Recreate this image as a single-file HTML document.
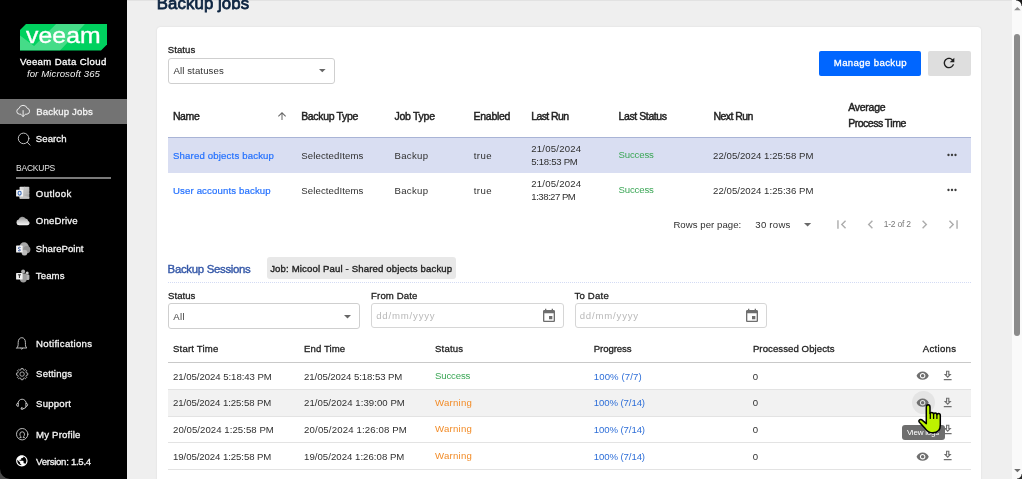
<!DOCTYPE html>
<html>
<head>
<meta charset="utf-8">
<title>Backup jobs</title>
<style>
*{box-sizing:border-box;margin:0;padding:0}
html,body{width:1022px;height:479px;overflow:hidden;background:#efefef;font-family:"Liberation Sans",sans-serif;font-size:10.5px;color:#2a2a2a}
.a{position:absolute}
.t{position:absolute;white-space:nowrap;font-family:"Liberation Sans",sans-serif}
svg{position:absolute;display:block;overflow:visible}
</style>
</head>
<body>
<div id="root" style="position:absolute;left:0;top:0;width:1022px;height:479px;overflow:hidden;will-change:transform">
<!-- page bg + card -->
<div class="a" style="left:127px;top:0;width:895px;height:479px;background:#efefef"></div>
<div class="a" style="left:127px;top:0;width:895px;height:1px;background:#e2e2e2"></div>
<div class="a" style="left:157px;top:27px;width:824px;height:470px;background:#fff;border-radius:3.5px;box-shadow:0 0 2px rgba(0,0,0,0.10)"></div>

<!-- scrollbar -->
<div class="a" style="left:1012px;top:0;width:10px;height:479px;background:#fafafa"></div>
<div class="a" style="left:1014px;top:34px;width:6px;height:302px;background:#8b8b8b;border-radius:3px"></div>
<svg style="left:1013.6px;top:6.8px" width="6.8" height="3.3" viewBox="0 0 8 4"><path d="M0 4L4 0L8 4z" fill="#8c8c8c"/></svg>
<svg style="left:1013.6px;top:468.9px" width="6.8" height="3.3" viewBox="0 0 8 4"><path d="M0 0L4 4L8 0z" fill="#6e6e6e"/></svg>
<div class="a" style="left:1016px;top:0;width:6px;height:6px;background:radial-gradient(circle at 0 100%,#fafafa 5px,#1a1a1a 6px)"></div>
<div class="a" style="left:1017px;top:474px;width:5px;height:5px;background:radial-gradient(circle at 0 0,#fafafa 4px,#2a2a2a 5px)"></div>

<!-- SIDEBAR -->
<div class="a" style="left:0;top:0;width:127px;height:479px;background:#000"></div>
<div class="a" style="left:0;top:99px;width:127px;height:24.5px;background:#737373"></div>
<div class="a" style="left:16px;top:177.4px;width:95px;height:1.2px;background:#7a7a7a"></div>

<!-- logo -->
<svg style="left:20px;top:24px" width="87" height="26.5" viewBox="0 0 87 26.5">
  <defs><clipPath id="lg"><path d="M6 0H87V20.5L81 26.5H0V6z"/></clipPath></defs>
  <path d="M6 0H87V20.5L81 26.5H0V6z" fill="#00d15f"/>
  <g clip-path="url(#lg)"><path d="M0 11.6L14.1 21.9L36.1 0H64.9L40 26.5H0z" fill="#45dc88"/></g>
</svg>
<div class="a" style="white-space:nowrap;left:26.3px;top:21.1px;font-size:22px;line-height:30px;height:30px;color:#fff;letter-spacing:0.1px;-webkit-text-stroke:0.35px #fff;transform:scaleX(1.125);transform-origin:0 0">veeam</div>

<!-- top filter select -->
<div class="a" style="left:168px;top:58px;width:167px;height:25.5px;border:1px solid #cfcfcf;border-radius:3px;background:#fff"></div>
<svg style="left:318.6px;top:69px" width="6.6" height="3.4" viewBox="0 0 10 5"><path d="M0 0h10L5 5z" fill="#666"/></svg>

<!-- buttons -->
<div class="a" style="left:819px;top:51px;width:102px;height:24.5px;background:#0066ff;border-radius:2px"></div>
<div class="a" style="left:928px;top:51px;width:42.7px;height:24.5px;background:#dedede;border-radius:2px"></div>
<svg style="left:941px;top:55px" width="16" height="16" viewBox="0 0 24 24"><path fill="#1f1f1f" d="M17.65 6.35C16.2 4.9 14.21 4 12 4c-4.42 0-7.99 3.58-7.99 8s3.57 8 7.99 8c3.73 0 6.84-2.55 7.730-6h-2.080c-.82 2.330-3.040 4-5.650 4-3.310 0-6-2.690-6-6s2.690-6 6-6c1.660 0 3.140.69 4.220 1.780L13 11h7V4l-2.350 2.350z"/></svg>

<!-- table 1 -->
<div class="a" style="left:168px;top:137.4px;width:802.7px;height:35.2px;background:#d9def2;border-top:1px solid #a9b4d6"></div>
<svg style="left:276px;top:110px" width="12" height="12" viewBox="0 0 24 24"><path fill="#666" d="M4 12l1.410 1.410L11 7.830V20h2V7.830l5.580 5.590L20 12l-8-8-8 8z"/></svg>
<svg style="left:944.8px;top:147.5px" width="14" height="14" viewBox="0 0 24 24"><path fill="#3a3a3a" d="M6 10c-1.100 0-2 .9-2 2s.9 2 2 2 2-.9 2-2-.9-2-2-2zm12 0c-1.100 0-2 .9-2 2s.9 2 2 2 2-.9 2-2-.9-2-2-2zm-6 0c-1.100 0-2 .9-2 2s.9 2 2 2 2-.9 2-2-.9-2-2-2z"/></svg>
<svg style="left:944.8px;top:182.8px" width="14" height="14" viewBox="0 0 24 24"><path fill="#3a3a3a" d="M6 10c-1.100 0-2 .9-2 2s.9 2 2 2 2-.9 2-2-.9-2-2-2zm12 0c-1.100 0-2 .9-2 2s.9 2 2 2 2-.9 2-2-.9-2-2-2zm-6 0c-1.100 0-2 .9-2 2s.9 2 2 2 2-.9 2-2-.9-2-2-2z"/></svg>

<!-- pagination icons -->
<svg style="left:803.6px;top:223.4px" width="7.2" height="3.6" viewBox="0 0 10 5"><path d="M0 0h10L5 5z" fill="#6a6a6a"/></svg>
<svg style="left:832.5px;top:216.3px" width="17" height="17" viewBox="0 0 24 24"><path fill="#adadad" d="M18.410 16.590L13.820 12l4.590-4.590L17 6l-6 6 6 6zM6 6h2v12H6z"/></svg>
<svg style="left:861.5px;top:216.3px" width="17" height="17" viewBox="0 0 24 24"><path fill="#adadad" d="M15.410 7.410L14 6l-6 6 6 6 1.410-1.410L10.830 12z"/></svg>
<svg style="left:915.6px;top:216.3px" width="17" height="17" viewBox="0 0 24 24"><path fill="#adadad" d="M10 6L8.590 7.410 13.170 12l-4.580 4.590L10 18l6-6z"/></svg>
<svg style="left:945px;top:216.3px" width="17" height="17" viewBox="0 0 24 24"><path fill="#adadad" d="M5.590 7.410L10.180 12l-4.590 4.590L7 18l6-6-6-6zM16 6h2v12h-2z"/></svg>

<!-- sessions -->
<div class="a" style="left:266.5px;top:257.3px;width:189.4px;height:22.1px;background:#e8e8e8;border-radius:3px"></div>
<div class="a" style="left:168px;top:282px;width:803px;height:0;border-top:1px dotted #d3dbf4"></div>
<div class="a" style="left:168.3px;top:303.3px;width:192.2px;height:25.5px;border:1px solid #cfcfcf;border-radius:3px;background:#fff"></div>
<svg style="left:344px;top:315px" width="7" height="3.5" viewBox="0 0 10 5"><path d="M0 0h10L5 5z" fill="#666"/></svg>
<div class="a" style="left:371.4px;top:303.1px;width:192.4px;height:24.6px;border:1px solid #d6d6d6;border-radius:3px;background:#fff"></div>
<div class="a" style="left:574.5px;top:303.1px;width:192.7px;height:24.6px;border:1px solid #d6d6d6;border-radius:3px;background:#fff"></div>
<svg style="left:541px;top:308.2px" width="16" height="16" viewBox="0 0 24 24"><path fill="#6e6e6e" d="M17 12h-5v5h5v-5zM16 1v2H8V1H6v2H5c-1.110 0-1.990.9-1.990 2L3 19c0 1.100.89 2 2 2h14c1.100 0 2-.9 2-2V5c0-1.100-.9-2-2-2h-1V1h-2zm3 18H5V8h14v11z"/></svg>
<svg style="left:744.2px;top:308.2px" width="16" height="16" viewBox="0 0 24 24"><path fill="#6e6e6e" d="M17 12h-5v5h5v-5zM16 1v2H8V1H6v2H5c-1.110 0-1.990.9-1.990 2L3 19c0 1.100.89 2 2 2h14c1.100 0 2-.9 2-2V5c0-1.100-.9-2-2-2h-1V1h-2zm3 18H5V8h14v11z"/></svg>

<!-- sessions table lines -->
<div class="a" style="left:168px;top:389.6px;width:802.7px;height:26.6px;background:#f2f2f2"></div>
<div class="a" style="left:168px;top:361.8px;width:802.7px;height:1px;background:#c9c9c9"></div>
<div class="a" style="left:168px;top:388.8px;width:802.7px;height:1px;background:#e3e3e3"></div>
<div class="a" style="left:168px;top:415.8px;width:802.7px;height:1px;background:#e3e3e3"></div>
<div class="a" style="left:168px;top:442px;width:802.7px;height:1px;background:#e3e3e3"></div>
<div class="a" style="left:168px;top:468.9px;width:802.7px;height:1px;background:#e3e3e3"></div>

<!-- action icons -->
<div class="a" style="left:911.6px;top:391.3px;width:23.2px;height:23.2px;border-radius:50%;background:#e4e4e4"></div>
<svg style="left:916.0px;top:369.2px" width="13.3" height="13.3" viewBox="0 0 24 24"><path fill="#6f6f6f" d="M12 4.5C7 4.5 2.730 7.610 1 12c1.730 4.390 6 7.500 11 7.500s9.270-3.110 11-7.500c-1.730-4.390-6-7.500-11-7.500zM12 17c-2.760 0-5-2.240-5-5s2.240-5 5-5 5 2.240 5 5-2.240 5-5 5zm0-8c-1.660 0-3 1.340-3 3s1.340 3 3 3 3-1.340 3-3-1.340-3-3-3z"/></svg>
<svg style="left:940.7px;top:369.0px" width="13.4" height="13.4" viewBox="0 0 24 24"><path fill="#6f6f6f" d="M13 5v6h1.170L12 13.170 9.830 11H11V5h2m2-2H9v6H5l7 7 7-7h-4V3zm4 15H5v2h14v-2z"/></svg>
<svg style="left:916.0px;top:396.2px" width="13.3" height="13.3" viewBox="0 0 24 24"><path fill="#6f6f6f" d="M12 4.5C7 4.5 2.730 7.610 1 12c1.730 4.390 6 7.500 11 7.500s9.270-3.110 11-7.500c-1.730-4.390-6-7.500-11-7.500zM12 17c-2.760 0-5-2.240-5-5s2.240-5 5-5 5 2.240 5 5-2.240 5-5 5zm0-8c-1.660 0-3 1.340-3 3s1.340 3 3 3 3-1.340 3-3-1.340-3-3-3z"/></svg>
<svg style="left:940.7px;top:395.9px" width="13.4" height="13.4" viewBox="0 0 24 24"><path fill="#6f6f6f" d="M13 5v6h1.170L12 13.170 9.830 11H11V5h2m2-2H9v6H5l7 7 7-7h-4V3zm4 15H5v2h14v-2z"/></svg>
<svg style="left:916.0px;top:422.8px" width="13.3" height="13.3" viewBox="0 0 24 24"><path fill="#6f6f6f" d="M12 4.5C7 4.5 2.730 7.610 1 12c1.730 4.390 6 7.500 11 7.500s9.270-3.110 11-7.500c-1.730-4.390-6-7.500-11-7.500zM12 17c-2.760 0-5-2.240-5-5s2.240-5 5-5 5 2.240 5 5-2.240 5-5 5zm0-8c-1.660 0-3 1.340-3 3s1.340 3 3 3 3-1.340 3-3-1.340-3-3-3z"/></svg>
<svg style="left:940.7px;top:422.5px" width="13.4" height="13.4" viewBox="0 0 24 24"><path fill="#6f6f6f" d="M13 5v6h1.170L12 13.170 9.830 11H11V5h2m2-2H9v6H5l7 7 7-7h-4V3zm4 15H5v2h14v-2z"/></svg>
<svg style="left:916.0px;top:449.5px" width="13.3" height="13.3" viewBox="0 0 24 24"><path fill="#6f6f6f" d="M12 4.5C7 4.5 2.730 7.610 1 12c1.730 4.390 6 7.500 11 7.500s9.270-3.110 11-7.500c-1.730-4.390-6-7.500-11-7.500zM12 17c-2.760 0-5-2.240-5-5s2.240-5 5-5 5 2.240 5 5-2.240 5-5 5zm0-8c-1.660 0-3 1.340-3 3s1.340 3 3 3 3-1.340 3-3-1.340-3-3-3z"/></svg>
<svg style="left:940.7px;top:449.2px" width="13.4" height="13.4" viewBox="0 0 24 24"><path fill="#6f6f6f" d="M13 5v6h1.170L12 13.170 9.830 11H11V5h2m2-2H9v6H5l7 7 7-7h-4V3zm4 15H5v2h14v-2z"/></svg>
<!-- sidebar icons -->
<svg style="left:16px;top:105px" width="14.4" height="12.2" viewBox="0 0 14.4 12.2" fill="none" stroke="#ececec" stroke-width="1" stroke-linecap="round" stroke-linejoin="round">
<path d="M4.6 9.2H3.4A2.9 2.9 0 0 1 3.0 3.5A4.3 4.3 0 0 1 11.2 3.2A3.05 3.05 0 0 1 10.9 9.2H9.6"/>
<path d="M7.1 5.6V11.4M5.2 9.6L7.1 11.6L9 9.6"/></svg>
<svg style="left:17px;top:131.5px" width="14" height="14" viewBox="0 0 14 14" fill="none" stroke="#c9c9c9" stroke-width="0.95" stroke-linecap="round">
<circle cx="6.6" cy="6.4" r="5.3"/><path d="M10.4 10.4L13 13.1"/></svg>
<svg style="left:16px;top:186px" width="14" height="13.5" viewBox="0 0 14 13.5">
<defs><linearGradient id="og" x1="0" y1="0" x2="1" y2="1"><stop offset="0" stop-color="#e9e9e9"/><stop offset="1" stop-color="#9a9a9a"/></linearGradient></defs>
<rect x="3.6" y="0.7" width="9.7" height="12" rx="0.8" fill="url(#og)"/>
<path d="M8.6 0.7V7.5H13.3M8.6 4.2H13.3" stroke="#bdbdbd" stroke-width="0.6" fill="none"/>
<path d="M3.6 8.5L13.3 11V12.7H3.6z" fill="#c4c4c4"/>
<rect x="0.1" y="3.8" width="7" height="6.8" rx="0.6" fill="#f4f4f4"/>
<ellipse cx="3.6" cy="7.2" rx="1.55" ry="1.9" fill="none" stroke="#3a6bb8" stroke-width="1.1"/></svg>
<svg style="left:16px;top:215.6px" width="14" height="9.6" viewBox="0 0 14 9.6">
<defs><linearGradient id="od" x1="0" y1="0" x2="0" y2="1"><stop offset="0" stop-color="#8f8f8f"/><stop offset="0.55" stop-color="#cfcfcf"/><stop offset="1" stop-color="#f6f6f6"/></linearGradient></defs>
<path d="M3.2 9.3A2.9 2.9 0 0 1 2.6 3.6A3.9 3.9 0 0 1 9.6 2.5A3 3 0 0 1 12.2 4.9A2.3 2.3 0 0 1 11.4 9.3z" fill="url(#od)"/></svg>
<svg style="left:16px;top:241.5px" width="14.5" height="14" viewBox="0 0 14.5 14">
<circle cx="8.1" cy="5" r="4.7" fill="#a9a9a9"/>
<circle cx="10.8" cy="7.6" r="3.6" fill="#939393"/>
<circle cx="8.5" cy="10.6" r="2.9" fill="#bcbcbc"/>
<rect x="0.1" y="3.6" width="6.5" height="6.9" rx="0.6" fill="#f4f4f4"/>
<path d="M4.6 5.6Q3.3 4.9 2.5 5.7Q1.9 6.6 3.3 7.1Q4.8 7.6 4.2 8.5Q3.4 9.3 2 8.5" fill="none" stroke="#2d4f9e" stroke-width="0.95"/></svg>
<svg style="left:16px;top:268.5px" width="14" height="13.5" viewBox="0 0 14 13.5">
<circle cx="11.2" cy="3.9" r="1.5" fill="#c9c9c9"/>
<rect x="9.6" y="5.6" width="3.8" height="5.4" rx="1.2" fill="#b4b4b4"/>
<circle cx="7.1" cy="2.4" r="2" fill="#adadad"/>
<path d="M3.9 4.6H10.7V10A3.3 3.3 0 0 1 3.9 10z" fill="#9d9d9d"/>
<rect x="0.1" y="3.9" width="6.5" height="6.6" rx="0.6" fill="#f4f4f4"/>
<path d="M1.9 5.8H4.9M3.4 5.8V9" stroke="#333" stroke-width="1" fill="none"/></svg>
<svg style="left:16px;top:336.8px" width="11.6" height="13.6" viewBox="0 0 11.6 13.6" fill="none" stroke="#cfcfcf" stroke-width="0.9" stroke-linejoin="round" stroke-linecap="round">
<path d="M0.8 11H10.8C9.5 9.8 9.4 8.6 9.4 5.4C9.4 2.6 7.9 0.7 5.8 0.7C3.7 0.7 2.2 2.6 2.2 5.4C2.2 8.6 2.1 9.8 0.8 11z"/>
<path d="M4.7 11.4Q5.8 13.4 6.9 11.4"/></svg>
<svg style="left:15.6px;top:368px" width="12.2" height="12.2" viewBox="0 0 12.2 12.2" fill="none" stroke="#c4c4c4" stroke-width="0.85" stroke-linejoin="round">
<path d="M11.72 5.12L11.72 7.08L10.48 7.15L9.94 8.45L10.76 9.38L9.38 10.76L8.45 9.94L7.15 10.48L7.08 11.72L5.12 11.72L5.05 10.48L3.75 9.94L2.82 10.76L1.44 9.38L2.26 8.45L1.72 7.15L0.48 7.08L0.48 5.12L1.72 5.05L2.26 3.75L1.44 2.82L2.82 1.44L3.75 2.26L5.05 1.72L5.12 0.48L7.08 0.48L7.15 1.72L8.45 2.26L9.38 1.44L10.76 2.82L9.94 3.75L10.48 5.05Z"/><circle cx="6.1" cy="6.1" r="2.2"/></svg>
<svg style="left:15.8px;top:397.8px" width="12.2" height="12" viewBox="0 0 12.2 12" fill="none" stroke="#cfcfcf" stroke-width="0.9" stroke-linecap="round" stroke-linejoin="round">
<path d="M1.9 5.4A4.2 4.2 0 0 1 10.3 5.4"/>
<path d="M1.9 5.2Q0.5 5.4 0.5 6.8Q0.5 8.2 1.9 8.4z"/>
<path d="M10.3 5.2Q11.7 5.4 11.7 6.8Q11.7 8.2 10.3 8.4z"/>
<path d="M10.3 8.4Q10.1 10.6 7.3 10.7"/><rect x="5" y="10" width="2.3" height="1.4" rx="0.7"/></svg>
<svg style="left:15.6px;top:427.5px" width="12.4" height="12.4" viewBox="0 0 12.4 12.4" fill="none" stroke="#c9c9c9" stroke-width="0.9" stroke-linecap="round">
<circle cx="6.2" cy="6.2" r="5.7"/>
<path d="M3.9 9.6H5.2C5.2 8.6 3.9 8.1 3.9 6.1A2.3 2.3 0 0 1 8.5 6.1C8.5 8.1 7.2 8.6 7.2 9.6H8.5"/></svg>
<svg style="left:14.6px;top:454.1px" width="13.7" height="13.7" viewBox="0 0 24 24"><path fill="#ffffff" d="M12 2C6.480 2 2 6.480 2 12s4.480 10 10 10 10-4.480 10-10S17.520 2 12 2zm-1 17.930c-3.950-.49-7-3.850-7-7.930 0-.62.08-1.210.21-1.790L9 15v1c0 1.100.9 2 2 2v1.930zm6.900-2.540c-.26-.81-1-1.390-1.900-1.390h-1v-3c0-.55-.45-1-1-1H8v-2h2c.55 0 1-.45 1-1V7h2c1.100 0 2-.9 2-2v-.41c2.930 1.190 5 4.060 5 7.410 0 2.080-.8 3.970-2.100 5.390z"/></svg>
<svg style="left:0;top:469px" width="10" height="10" viewBox="0 0 10 10"><path d="M0 0V10H10A10 10 0 0 1 0 0z" fill="#4a4a4a"/></svg>
<!-- tooltip + cursor -->
<div class="a" style="left:902.1px;top:424.6px;width:42.8px;height:15.8px;background:#6e6e6e;border-radius:3px"></div>

<!-- TEXT -->
<div class="t" style="left:19.9px;top:54.8px;font-size:9.6px;line-height:13px;height:13px;color:#ffffff;-webkit-text-stroke:0.3px #ffffff;letter-spacing:0.396px;">Veeam Data Cloud</div>
<div class="t" style="left:26.9px;top:67.1px;font-size:9.6px;line-height:13px;height:13px;color:#f0f0f0;font-style:italic;letter-spacing:0.101px;">for Microsoft 365</div>
<div class="t" style="left:36.2px;top:104.8px;font-size:9.6px;line-height:13px;height:13px;color:#f4f4f4;-webkit-text-stroke:0.3px #f4f4f4;letter-spacing:0.173px;">Backup Jobs</div>
<div class="t" style="left:35.8px;top:132.0px;font-size:9.6px;line-height:13px;height:13px;color:#f4f4f4;-webkit-text-stroke:0.3px #f4f4f4;letter-spacing:0.072px;">Search</div>
<div class="t" style="left:16.0px;top:162.1px;font-size:8.5px;line-height:12px;height:12px;color:#e4e4e4;letter-spacing:-0.227px;">BACKUPS</div>
<div class="t" style="left:35.8px;top:186.9px;font-size:9.6px;line-height:13px;height:13px;color:#f4f4f4;-webkit-text-stroke:0.3px #f4f4f4;letter-spacing:0.398px;">Outlook</div>
<div class="t" style="left:35.8px;top:214.3px;font-size:9.6px;line-height:13px;height:13px;color:#f4f4f4;-webkit-text-stroke:0.3px #f4f4f4;letter-spacing:0.176px;">OneDrive</div>
<div class="t" style="left:35.8px;top:242.2px;font-size:9.6px;line-height:13px;height:13px;color:#f4f4f4;-webkit-text-stroke:0.3px #f4f4f4;letter-spacing:0.022px;">SharePoint</div>
<div class="t" style="left:35.8px;top:269.3px;font-size:9.6px;line-height:13px;height:13px;color:#f4f4f4;-webkit-text-stroke:0.3px #f4f4f4;letter-spacing:0.100px;">Teams</div>
<div class="t" style="left:36.1px;top:337.1px;font-size:9.6px;line-height:13px;height:13px;color:#f4f4f4;-webkit-text-stroke:0.3px #f4f4f4;letter-spacing:0.308px;">Notifications</div>
<div class="t" style="left:36.1px;top:367.4px;font-size:9.6px;line-height:13px;height:13px;color:#f4f4f4;-webkit-text-stroke:0.3px #f4f4f4;letter-spacing:0.170px;">Settings</div>
<div class="t" style="left:36.1px;top:397.0px;font-size:9.6px;line-height:13px;height:13px;color:#f4f4f4;-webkit-text-stroke:0.3px #f4f4f4;letter-spacing:0.209px;">Support</div>
<div class="t" style="left:36.1px;top:427.6px;font-size:9.6px;line-height:13px;height:13px;color:#f4f4f4;-webkit-text-stroke:0.3px #f4f4f4;letter-spacing:0.190px;">My Profile</div>
<div class="t" style="left:36.1px;top:454.7px;font-size:9.6px;line-height:13px;height:13px;color:#f4f4f4;-webkit-text-stroke:0.3px #f4f4f4;letter-spacing:-0.278px;">Version: 1.5.4</div>
<div class="t" style="left:156.8px;top:-8.1px;font-size:16.8px;line-height:24px;height:24px;color:#0b2340;-webkit-text-stroke:0.75px #0b2340;letter-spacing:0.089px;">Backup jobs</div>
<div class="t" style="left:167.7px;top:43.1px;font-size:9.6px;line-height:13px;height:13px;color:#1f1f1f;-webkit-text-stroke:0.3px #1f1f1f;letter-spacing:0.092px;">Status</div>
<div class="t" style="left:173.4px;top:64.0px;font-size:9.6px;line-height:13px;height:13px;color:#333;letter-spacing:0.118px;">All statuses</div>
<div class="t" style="left:833.8px;top:56.4px;font-size:9.6px;line-height:13px;height:13px;color:#ffffff;-webkit-text-stroke:0.3px #ffffff;letter-spacing:0.374px;">Manage backup</div>
<div class="t" style="left:172.9px;top:108.6px;font-size:10.5px;line-height:15px;height:15px;color:#1f1f1f;-webkit-text-stroke:0.45px #1f1f1f;letter-spacing:-0.357px;">Name</div>
<div class="t" style="left:301.2px;top:108.6px;font-size:10.5px;line-height:15px;height:15px;color:#1f1f1f;-webkit-text-stroke:0.45px #1f1f1f;letter-spacing:-0.337px;">Backup Type</div>
<div class="t" style="left:394.4px;top:108.6px;font-size:10.5px;line-height:15px;height:15px;color:#1f1f1f;-webkit-text-stroke:0.45px #1f1f1f;letter-spacing:-0.254px;">Job Type</div>
<div class="t" style="left:473.6px;top:108.6px;font-size:10.5px;line-height:15px;height:15px;color:#1f1f1f;-webkit-text-stroke:0.45px #1f1f1f;letter-spacing:-0.300px;">Enabled</div>
<div class="t" style="left:531.2px;top:108.6px;font-size:10.5px;line-height:15px;height:15px;color:#1f1f1f;-webkit-text-stroke:0.45px #1f1f1f;letter-spacing:-0.598px;">Last Run</div>
<div class="t" style="left:618.5px;top:108.6px;font-size:10.5px;line-height:15px;height:15px;color:#1f1f1f;-webkit-text-stroke:0.45px #1f1f1f;letter-spacing:-0.399px;">Last Status</div>
<div class="t" style="left:713.5px;top:108.6px;font-size:10.5px;line-height:15px;height:15px;color:#1f1f1f;-webkit-text-stroke:0.45px #1f1f1f;letter-spacing:-0.562px;">Next Run</div>
<div class="t" style="left:848.3px;top:99.6px;font-size:10.5px;line-height:15px;height:15px;color:#1f1f1f;-webkit-text-stroke:0.45px #1f1f1f;letter-spacing:-0.279px;">Average</div>
<div class="t" style="left:848.3px;top:116.1px;font-size:10.5px;line-height:15px;height:15px;color:#1f1f1f;-webkit-text-stroke:0.45px #1f1f1f;letter-spacing:-0.515px;">Process Time</div>
<div class="t" style="left:173.0px;top:149.0px;font-size:9.6px;line-height:13px;height:13px;color:#2471ff;-webkit-text-stroke:0.2px #2471ff;letter-spacing:0.168px;">Shared objects backup</div>
<div class="t" style="left:301.3px;top:149.0px;font-size:9.6px;line-height:13px;height:13px;color:#303030;letter-spacing:0.106px;">SelectedItems</div>
<div class="t" style="left:394.5px;top:149.0px;font-size:9.6px;line-height:13px;height:13px;color:#303030;letter-spacing:0.293px;">Backup</div>
<div class="t" style="left:473.7px;top:149.0px;font-size:9.6px;line-height:13px;height:13px;color:#303030;letter-spacing:0.472px;">true</div>
<div class="t" style="left:531.3px;top:141.8px;font-size:9.6px;line-height:13px;height:13px;color:#303030;letter-spacing:0.194px;">21/05/2024</div>
<div class="t" style="left:531.3px;top:155.1px;font-size:9.6px;line-height:13px;height:13px;color:#303030;letter-spacing:-0.290px;">5:18:53 PM</div>
<div class="t" style="left:618.6px;top:148.3px;font-size:9.6px;line-height:13px;height:13px;color:#3aa655;letter-spacing:-0.167px;">Success</div>
<div class="t" style="left:713.1px;top:149.0px;font-size:9.6px;line-height:13px;height:13px;color:#303030;letter-spacing:0.031px;">22/05/2024 1:25:58 PM</div>
<div class="t" style="left:173.0px;top:184.1px;font-size:9.6px;line-height:13px;height:13px;color:#2471ff;-webkit-text-stroke:0.2px #2471ff;letter-spacing:0.144px;">User accounts backup</div>
<div class="t" style="left:301.3px;top:184.1px;font-size:9.6px;line-height:13px;height:13px;color:#303030;letter-spacing:0.106px;">SelectedItems</div>
<div class="t" style="left:394.5px;top:184.1px;font-size:9.6px;line-height:13px;height:13px;color:#303030;letter-spacing:0.293px;">Backup</div>
<div class="t" style="left:473.7px;top:184.1px;font-size:9.6px;line-height:13px;height:13px;color:#303030;letter-spacing:0.472px;">true</div>
<div class="t" style="left:531.3px;top:177.0px;font-size:9.6px;line-height:13px;height:13px;color:#303030;letter-spacing:0.194px;">21/05/2024</div>
<div class="t" style="left:531.3px;top:190.3px;font-size:9.6px;line-height:13px;height:13px;color:#303030;letter-spacing:-0.502px;">1:38:27 PM</div>
<div class="t" style="left:618.6px;top:183.4px;font-size:9.6px;line-height:13px;height:13px;color:#3aa655;letter-spacing:-0.167px;">Success</div>
<div class="t" style="left:713.1px;top:184.1px;font-size:9.6px;line-height:13px;height:13px;color:#303030;letter-spacing:0.031px;">22/05/2024 1:25:36 PM</div>
<div class="t" style="left:673.4px;top:218.2px;font-size:9.6px;line-height:13px;height:13px;color:#303030;letter-spacing:0.051px;">Rows per page:</div>
<div class="t" style="left:755.3px;top:218.2px;font-size:9.6px;line-height:13px;height:13px;color:#303030;letter-spacing:0.245px;">30 rows</div>
<div class="t" style="left:883.7px;top:218.4px;font-size:8.5px;line-height:12px;height:12px;color:#787878;letter-spacing:-0.223px;">1-2 of 2</div>
<div class="t" style="left:167.6px;top:261.0px;font-size:11.4px;line-height:16px;height:16px;color:#3558a8;-webkit-text-stroke:0.4px #3558a8;letter-spacing:-0.297px;">Backup Sessions</div>
<div class="t" style="left:270.2px;top:262.0px;font-size:9.6px;line-height:13px;height:13px;color:#1f1f1f;-webkit-text-stroke:0.35px #1f1f1f;letter-spacing:0.140px;">Job: Micool Paul - Shared objects backup</div>
<div class="t" style="left:168.0px;top:288.7px;font-size:9.6px;line-height:13px;height:13px;color:#1f1f1f;-webkit-text-stroke:0.3px #1f1f1f;letter-spacing:0.032px;">Status</div>
<div class="t" style="left:371.1px;top:288.7px;font-size:9.6px;line-height:13px;height:13px;color:#1f1f1f;-webkit-text-stroke:0.3px #1f1f1f;letter-spacing:0.117px;">From Date</div>
<div class="t" style="left:574.4px;top:288.7px;font-size:9.6px;line-height:13px;height:13px;color:#1f1f1f;-webkit-text-stroke:0.3px #1f1f1f;letter-spacing:0.217px;">To Date</div>
<div class="t" style="left:173.3px;top:310.1px;font-size:9.6px;line-height:13px;height:13px;color:#444;letter-spacing:0.396px;">All</div>
<div class="t" style="left:376.2px;top:309.2px;font-size:9.6px;line-height:13px;height:13px;color:#b9b9b9;letter-spacing:0.809px;">dd/mm/yyyy</div>
<div class="t" style="left:579.7px;top:309.2px;font-size:9.6px;line-height:13px;height:13px;color:#b9b9b9;letter-spacing:0.808px;">dd/mm/yyyy</div>
<div class="t" style="left:173.0px;top:341.9px;font-size:9.6px;line-height:13px;height:13px;color:#1f1f1f;-webkit-text-stroke:0.3px #1f1f1f;letter-spacing:0.172px;">Start Time</div>
<div class="t" style="left:304.1px;top:341.9px;font-size:9.6px;line-height:13px;height:13px;color:#1f1f1f;-webkit-text-stroke:0.3px #1f1f1f;letter-spacing:0.062px;">End Time</div>
<div class="t" style="left:435.0px;top:341.9px;font-size:9.6px;line-height:13px;height:13px;color:#1f1f1f;-webkit-text-stroke:0.3px #1f1f1f;letter-spacing:0.192px;">Status</div>
<div class="t" style="left:593.8px;top:341.9px;font-size:9.6px;line-height:13px;height:13px;color:#1f1f1f;-webkit-text-stroke:0.3px #1f1f1f;letter-spacing:-0.090px;">Progress</div>
<div class="t" style="left:752.9px;top:341.9px;font-size:9.6px;line-height:13px;height:13px;color:#1f1f1f;-webkit-text-stroke:0.3px #1f1f1f;letter-spacing:0.071px;">Processed Objects</div>
<div class="t" style="left:922.7px;top:341.9px;font-size:9.6px;line-height:13px;height:13px;color:#1f1f1f;-webkit-text-stroke:0.3px #1f1f1f;letter-spacing:0.299px;">Actions</div>
<div class="t" style="left:173.0px;top:369.5px;font-size:9.6px;line-height:13px;height:13px;color:#303030;letter-spacing:-0.044px;">21/05/2024 5:18:43 PM</div>
<div class="t" style="left:304.1px;top:369.5px;font-size:9.6px;line-height:13px;height:13px;color:#303030;letter-spacing:-0.074px;">21/05/2024 5:18:53 PM</div>
<div class="t" style="left:435.0px;top:369.0px;font-size:9.6px;line-height:13px;height:13px;color:#3aa655;letter-spacing:-0.150px;">Success</div>
<div class="t" style="left:593.8px;top:369.5px;font-size:9.6px;line-height:13px;height:13px;color:#2f6fd8;letter-spacing:0.103px;">100% (7/7)</div>
<div class="t" style="left:752.8px;top:369.5px;font-size:9.6px;line-height:13px;height:13px;color:#303030;letter-spacing:0.920px;">0</div>
<div class="t" style="left:173.0px;top:396.2px;font-size:9.6px;line-height:13px;height:13px;color:#303030;letter-spacing:-0.069px;">21/05/2024 1:25:58 PM</div>
<div class="t" style="left:304.1px;top:396.2px;font-size:9.6px;line-height:13px;height:13px;color:#303030;letter-spacing:0.051px;">21/05/2024 1:39:00 PM</div>
<div class="t" style="left:435.0px;top:395.7px;font-size:9.6px;line-height:13px;height:13px;color:#f28c28;letter-spacing:0.248px;">Warning</div>
<div class="t" style="left:593.8px;top:396.2px;font-size:9.6px;line-height:13px;height:13px;color:#2f6fd8;letter-spacing:-0.100px;">100% (7/14)</div>
<div class="t" style="left:752.8px;top:396.2px;font-size:9.6px;line-height:13px;height:13px;color:#303030;letter-spacing:0.920px;">0</div>
<div class="t" style="left:173.0px;top:422.9px;font-size:9.6px;line-height:13px;height:13px;color:#303030;letter-spacing:0.056px;">20/05/2024 1:25:58 PM</div>
<div class="t" style="left:304.1px;top:422.9px;font-size:9.6px;line-height:13px;height:13px;color:#303030;letter-spacing:0.151px;">20/05/2024 1:26:08 PM</div>
<div class="t" style="left:435.0px;top:422.4px;font-size:9.6px;line-height:13px;height:13px;color:#f28c28;letter-spacing:0.248px;">Warning</div>
<div class="t" style="left:593.8px;top:422.9px;font-size:9.6px;line-height:13px;height:13px;color:#2f6fd8;letter-spacing:-0.100px;">100% (7/14)</div>
<div class="t" style="left:752.8px;top:422.9px;font-size:9.6px;line-height:13px;height:13px;color:#303030;letter-spacing:0.920px;">0</div>
<div class="t" style="left:173.0px;top:449.6px;font-size:9.6px;line-height:13px;height:13px;color:#303030;letter-spacing:-0.069px;">19/05/2024 1:25:58 PM</div>
<div class="t" style="left:304.1px;top:449.6px;font-size:9.6px;line-height:13px;height:13px;color:#303030;letter-spacing:0.026px;">19/05/2024 1:26:08 PM</div>
<div class="t" style="left:435.0px;top:449.1px;font-size:9.6px;line-height:13px;height:13px;color:#f28c28;letter-spacing:0.248px;">Warning</div>
<div class="t" style="left:593.8px;top:449.6px;font-size:9.6px;line-height:13px;height:13px;color:#2f6fd8;letter-spacing:-0.100px;">100% (7/14)</div>
<div class="t" style="left:752.8px;top:449.6px;font-size:9.6px;line-height:13px;height:13px;color:#303030;letter-spacing:0.920px;">0</div>
<div class="t" style="left:906.9px;top:427.0px;font-size:8px;line-height:11px;height:11px;color:#ffffff;letter-spacing:-0.209px;">View logs</div>
<svg style="left:916px;top:403px" width="27" height="32" viewBox="916 403 27 32">
<path d="M926.3 407.2Q926.3 404.8 928.15 404.8Q930 404.8 930 407.2L930 413.6Q930.2 412.4 931.7 412.4Q933.4 412.4 933.5 414Q933.7 412.9 935.1 412.9Q936.8 412.9 936.9 414.6Q937.1 413.6 938.5 413.6Q940.3 413.6 940.3 415.6L940.3 425Q940.3 432.8 933 432.8Q928.3 432.8 925.2 428.6L919.6 422.6Q918.1 420.8 919.7 419.8Q921.2 419.1 922.8 420.6L926.3 423.6Z" fill="#bdf200" stroke="#000" stroke-width="1.5" stroke-linejoin="round"/>
<path d="M930.3 413.6V418.4M933.6 414V418.4M936.9 414.6V418.4" stroke="#000" stroke-width="1.3" fill="none" stroke-linecap="round"/>
</svg>
</div>
</body>
</html>
